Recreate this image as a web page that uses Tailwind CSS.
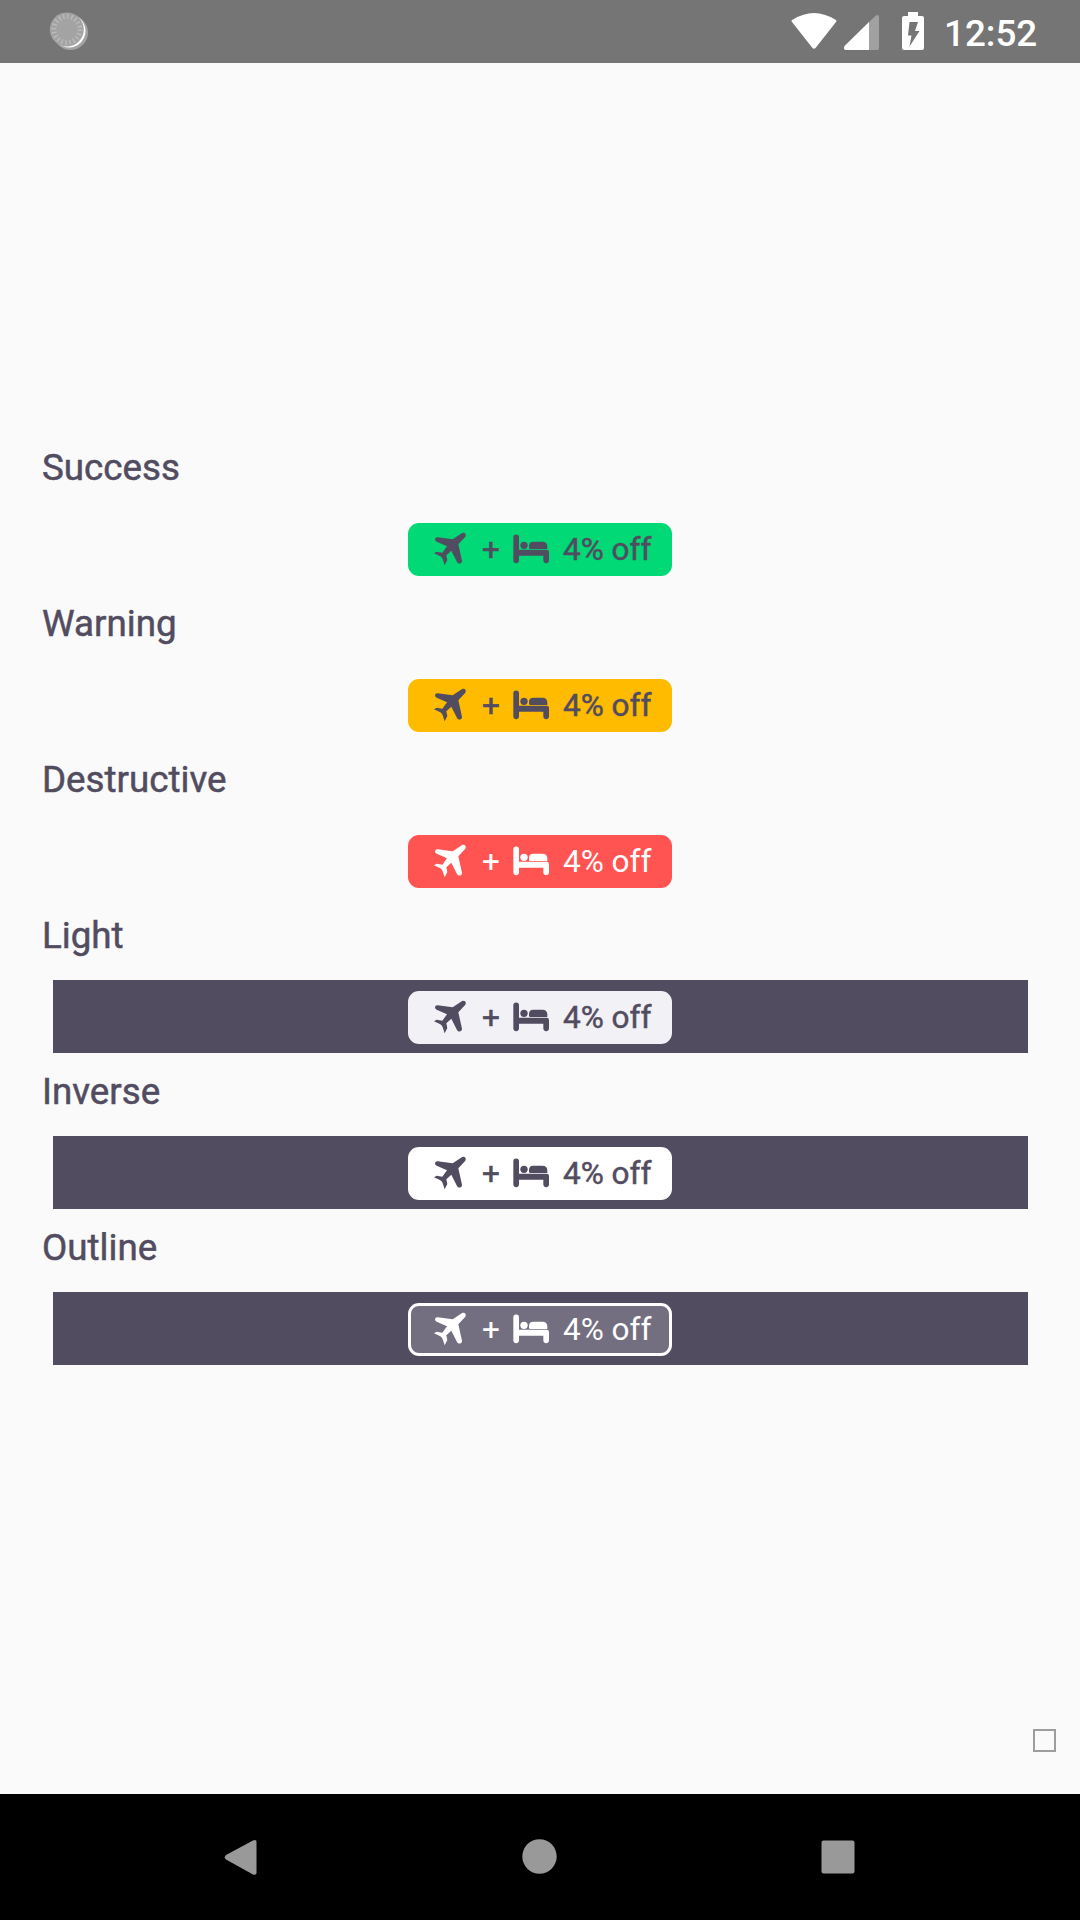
<!DOCTYPE html>
<html lang="en">
<head>
<meta charset="utf-8">
<title>Badges</title>
<script src="https://cdn.jsdelivr.net/npm/@tailwindcss/browser@4"></script>
</head>
<body class="flex h-[1920px] w-[1080px] flex-col overflow-hidden bg-[#fafafa] font-['Roboto',sans-serif] text-[#524c61]">
<svg class="hidden">
  <symbol id="plane" viewBox="96 48 108 108"><path d="M105 73Q106 66 113 67L158 73L183 56C191 50 201 56 196 65L175 88L186 137C187 146 175 149 171 141L154 107L139 121L142 135L134 151L128 133Q126 127 121 124L102 115L110 110L127 113L141 94L110 80Q105 78 105 73Z"/></symbol>
  <symbol id="bed" viewBox="336 48 114 108"><path d="M340 67a8.5 8.5 0 0 1 17 0V104H440a7 7 0 0 1 7 7V136a8.500 8.500 0 0 1-17 0V122H357V136a8.500 8.500 0 0 1-17 0Z"/><circle cx="372" cy="91" r="11"/><path d="M387 98V93q0-13 13-13h27q15 0 15 15v7H391q-4 0-4-4Z"/></symbol>
</svg>

<header class="flex h-[63px] shrink-0 items-start bg-[#757575] text-white">
  <svg class="ml-[49px] mt-[10px] h-10 w-10" viewBox="0 0 40 40">
    <circle cx="21.500" cy="22.500" r="17.500" fill="#a3a3a3"/>
    <circle cx="20" cy="21" r="16.500" fill="#fff"/>
    <circle cx="17.800" cy="19.500" r="17" fill="#a3a3a3"/>
    <circle cx="17.800" cy="19.500" r="13" fill="none" stroke="#bcbcbc" stroke-width="5" stroke-dasharray="1.300 2.784"/>
  </svg>
  <svg class="ml-[701px] h-[63px] w-[140px]" viewBox="0 0 140 63" fill="currentColor">
    <path d="M2 22Q0.500 20.700 3 19.500Q24 6.500 45 19.500Q47.500 20.700 46 22L25.500 48Q24 49.500 22.500 48Z"/>
    <path d="M54.500 46L79 22V50H56Q53 50 54.500 46Z"/>
    <path d="M79 22L86 15.500Q89 13.800 89 17V48q0 2-2 2H79Z" fill="#a1a1a1"/>
    <path fill-rule="evenodd" d="M118 12h10v4h4q2 0 2 2V48q0 2-2 2H114q-2 0-2-2V18q0-2 2-2h4ZM119.500 22L118 35.500H121.500L119.500 46.500L129.500 31H125L128 22Z"/>
  </svg>
  <span class="ml-[14px] mt-[12px] text-[36.750px] font-medium leading-[43px]">12:52</span>
</header>

<main class="flex grow flex-col pt-[366px] text-[36.750px]" id="list"></main>

<div class="flex h-[75px] shrink-0 items-start justify-end pr-[24px]"><span class="mt-[10px] h-[23px] w-[23px] border-2 border-[#9d9d9d]"></span></div>

<nav class="flex h-[126px] shrink-0 bg-black">
  <svg class="h-[126px] w-[1080px]" viewBox="0 0 1080 126" fill="#999">
    <path d="M226 61L253 46.500Q256.500 45 256.500 48V79Q256.500 81.500 253 80.500L226 65.500Q223.500 63.300 226 61Z"/>
    <circle cx="539.500" cy="62.500" r="17.200"/>
    <rect x="821.500" y="46.500" width="33" height="33" rx="2"/>
  </svg>
</nav>

<script>
const rows = [
  ["Success", "", "bg-[#00d976] border-[#00d976] [-webkit-text-stroke:0.5px_currentColor]"],
  ["Warning", "", "bg-[#ffbb00] border-[#ffbb00] [-webkit-text-stroke:0.5px_currentColor]"],
  ["Destructive", "", "bg-[#ff5452] border-[#ff5452] text-white"],
  ["Light", "bg-[#524c61]", "bg-[#f2f1f5] border-[#f2f1f5] [-webkit-text-stroke:0.5px_currentColor]"],
  ["Inverse", "bg-[#524c61]", "bg-white border-white [-webkit-text-stroke:0.5px_currentColor]"],
  ["Outline", "bg-[#524c61]", "bg-[#746f80] border-white text-white"]
];
document.getElementById("list").innerHTML = rows.map(([label, bar, badge]) => `
  <section class="h-[156px] shrink-0">
    <h2 class="ml-[42px] h-[83px] pt-[17px] leading-[43px] [-webkit-text-stroke:0.5px_currentColor]">${label}</h2>
    <div class="ml-[53px] flex h-[73px] w-[975px] pl-[355px] pt-[11px] ${bar}">
      <div class="flex h-[53px] w-[264px] items-start rounded-[11px] border-3 text-[31.500px] leading-[37px] ${badge}">
        <svg class="ml-[21px] mt-[5px] size-9 fill-current"><use href="#plane"/></svg>
        <span class="ml-[14px] mt-[5px] w-[18px]">+</span>
        <svg class="ml-[12px] mt-[5px] h-9 w-[38px] fill-current"><use href="#bed"/></svg>
        <span class="ml-[13px] mt-[5px] whitespace-nowrap">4% off</span>
      </div>
    </div>
  </section>`).join("");
</script>
</body>
</html>
